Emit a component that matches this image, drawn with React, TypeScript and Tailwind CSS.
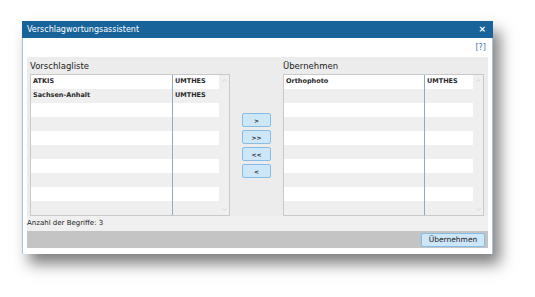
import { ChevronUp, ChevronDown } from 'lucide-react'

const font = { fontFamily: '"DejaVu Sans", Verdana, sans-serif' }

function List({ rows, first, second }: { rows: [string, string][]; first: string; second: string }) {
  const all = Array.from({ length: 10 }, (_, i) => rows[i] ?? ['', ''])
  return (
    <div className="flex h-[142px] border border-[#c9c9c9] bg-[#efefef]">
      <div className="flex flex-1 flex-col">
        {all.map((r, i) => (
          <div key={i} className={`flex h-[14px] ${i % 2 === 0 ? 'bg-white' : 'bg-[#efefef]'}`}>
            <div className={`${first} flex items-center pl-[2px] text-[6.5px] font-bold text-[#2a2a2a]`}>{r[0]}</div>
            <div className="w-px bg-[#8aaccb]" />
            <div className={`${second} flex items-center pl-[2px] text-[6.5px] font-bold text-[#2a2a2a]`}>{r[1]}</div>
          </div>
        ))}
      </div>
      <div className="flex w-[10px] flex-col items-center justify-between py-[2px] text-[#c4c4c4]">
        <ChevronUp size={7} strokeWidth={2} />
        <ChevronDown size={7} strokeWidth={2} />
      </div>
    </div>
  )
}

function MoveButton({ label }: { label: string }) {
  return (
    <button className="flex h-[14px] w-[29px] items-center justify-center rounded-[2px] border border-[#86bce6] bg-[#cde6f8] text-[6px] font-bold text-[#333]">
      {label}
    </button>
  )
}

export default function App() {
  return (
    <div className="h-[297px] w-[535px] bg-white pl-[22px] pt-[21px]" style={font}>
      <div className="flex h-[233px] w-[471px] flex-col bg-white shadow-[7px_10px_14px_rgba(0,0,0,0.5)]">
        <div className="flex h-[17px] items-center justify-between bg-[#17639a] pl-[5px] pr-[7px] text-[8px] text-white">
          <span>Verschlagwortungsassistent</span>
          <span className="text-[9px] font-bold">×</span>
        </div>
        <div className="flex flex-1 flex-col border-x border-[#a9c4da] px-[4px]">
          <div className="flex h-[19px] items-end justify-end pb-[3px] pr-[2px] text-[8px] text-[#3d78b0]">[?]</div>
          <div className="flex bg-[#ececec] px-[3px] pt-[2px]">
            <div className="flex w-[200px] flex-col">
              <div className="h-[15px] text-[8.5px] leading-[15px] text-[#222]">Vorschlagliste</div>
              <List rows={[['ATKIS', 'UMTHES'], ['Sachsen-Anhalt', 'UMTHES']]} first="w-[141px]" second="flex-1" />
            </div>
            <div className="flex w-[53px] flex-col items-center gap-[3px] pt-[54px]">
              <MoveButton label=">" />
              <MoveButton label=">>" />
              <MoveButton label="<<" />
              <MoveButton label="<" />
            </div>
            <div className="flex w-[201px] flex-col">
              <div className="h-[15px] text-[8.5px] leading-[15px] text-[#222]">Übernehmen</div>
              <List rows={[['Orthophoto', 'UMTHES']]} first="w-[140px]" second="flex-1" />
            </div>
          </div>
          <div className="flex h-[15px] items-center bg-[#f0f0f0] text-[7px] text-[#222]">Anzahl der Begriffe: 3</div>
          <div className="flex h-[17px] items-center justify-end bg-[#c4c4c4] pr-[3px]">
            <button className="flex h-[14px] w-[64px] items-center justify-center rounded-[2px] border border-[#86bce6] bg-[#cde6f8] text-[7.5px] text-[#222]">
              Übernehmen
            </button>
          </div>
          <div className="h-[6px]" />
        </div>
      </div>
    </div>
  )
}
